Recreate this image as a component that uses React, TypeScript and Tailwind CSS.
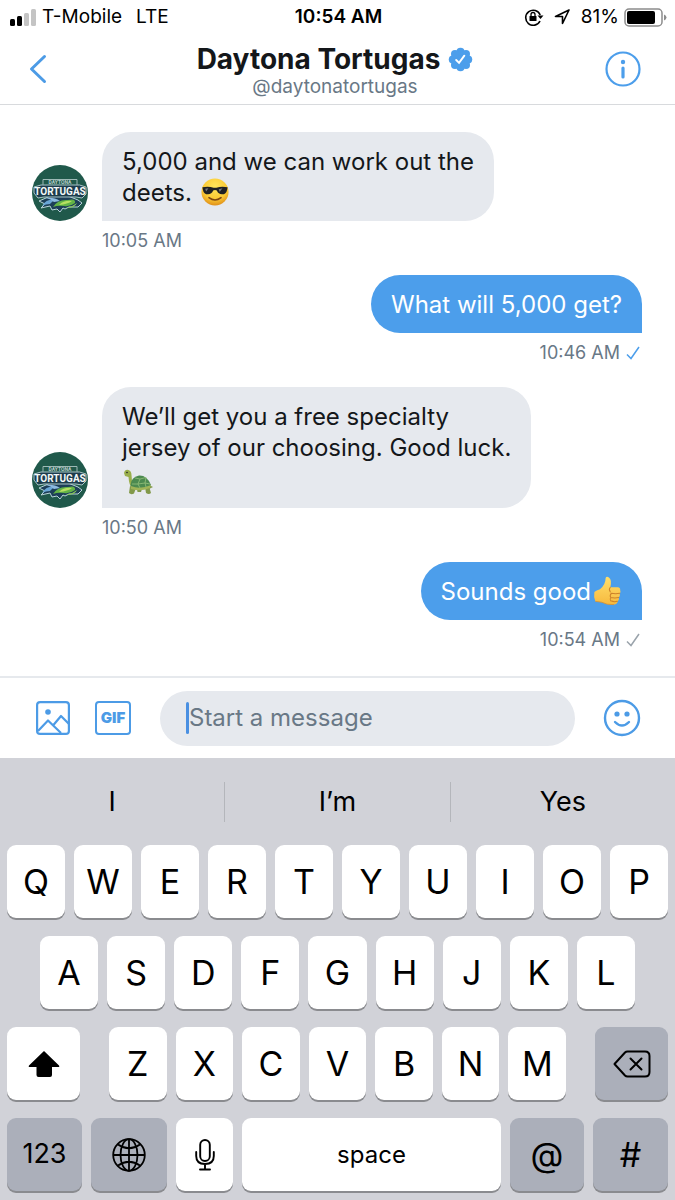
import React, { useState } from "react";

type Message = {
  id: number;
  mine: boolean;
  time: string;
  read?: boolean;
  body: React.ReactNode;
};

const TeamLogo = () => (
  <svg viewBox="0 0 56 56" className="size-14 shrink-0" role="img" aria-label="Daytona Tortugas">
    <circle cx="28" cy="28" r="28" fill="#20594b" />
    <path d="M11 20V14.500H45V20" fill="none" stroke="#9db9b6" strokeWidth="1" />
    <path
      d="M7 36L14 33L20 30L36 31L46 35L50 38L46 42H37L33 44L31 43L28 47L25 44L20 45L18 41L9 43L13 39Z"
      fill="#1d3f58"
      stroke="#b9d5d8"
      strokeWidth="1"
    />
    <path d="M10 41Q15 33 24 35Q20 36 18 39Q14 39 10 41Z" fill="#6aa6d6" />
    <path d="M14 33Q22 32 28 36L22 37Q19 34 14 33Z" fill="#8dbbe0" />
    <path d="M21 42Q26 34 36 35Q44 33 43 38Q38 42 32 41Q26 40 21 42Z" fill="#62b346" />
    <path d="M27 40Q32 35 40 36Q36 39 27 40Z" fill="#b7df62" />
    <path d="M34 43Q40 42 45 38Q43 43 34 43Z" fill="#8acb54" />
    <path
      d="M2 22Q10 19 14 20H42Q47 19 54 22L54 29L50 33L44 32H12L6 33L2 28Z"
      fill="#1c3c4c"
      stroke="#a9c6c8"
      strokeWidth="1"
    />
    <text
      x="28"
      y="19"
      textAnchor="middle"
      fontFamily="Roboto, sans-serif"
      fontWeight="700"
      fontSize="5"
      fill="#b4cbc8"
    >
      DAYTONA
    </text>
    <text
      x="28"
      y="30"
      textAnchor="middle"
      fontFamily="Roboto, sans-serif"
      fontWeight="700"
      fontSize="10"
      fill="#f3f8f8"
    >
      TORTUGAS
    </text>
  </svg>
);

const SunglassesEmoji = () => (
  <svg viewBox="0 0 30 30" className="ml-[2px] inline-block size-7 align-[-5px]" role="img" aria-label="😎">
    <defs>
      <radialGradient id="face" cx="0.5" cy="0.3" r="0.72">
        <stop offset="0" stopColor="#ffe65c" />
        <stop offset="0.65" stopColor="#fbc832" />
        <stop offset="1" stopColor="#dd8a17" />
      </radialGradient>
    </defs>
    <circle cx="15" cy="15" r="14.500" fill="url(#face)" />
    <path
      d="M1.500 10Q8 8.500 13.500 10.500H16.500Q22 8.500 28.500 10L28 12.500Q27 17.500 22.500 17.500Q18.500 17.500 17 13.500Q15 12 13 13.500Q11.500 17.500 7.500 17.500Q3 17.500 2 12.500Z"
      fill="#1f2023"
    />
    <path d="M4.500 11.500L8 11L5.500 14.500ZM19 12L23 11L20 15Z" fill="#747980" />
    <path d="M8.500 21Q15 26 21.500 21" fill="none" stroke="#7c4511" strokeWidth="1.6" strokeLinecap="round" />
  </svg>
);

const TurtleEmoji = () => (
  <svg viewBox="0 0 30 26" className="mx-px inline-block h-[26px] w-[30px] align-[-8px]" role="img" aria-label="🐢">
    <path d="M1 4Q2 0 5.500 1Q8.500 2 8.500 6L9 12L13 18L9 19Q6 16 5.500 8L2 7Z" fill="#9aaf4c" />
    <path d="M7 17L6 24Q8 26 11 24.500L13 19ZM22 18L23 24Q26 26 28 24L26 17ZM14 20L14.500 23H18L19 20Z" fill="#82994a" />
    <path d="M26 16L30 18L26 20Z" fill="#82994a" />
    <path d="M7.500 16Q8 8 16 6.500Q24 6 28 16Q22 22 9 20Z" fill="#4c8a50" />
    <path d="M8 17Q17 21 28 16L27 19Q17 23 8 20Z" fill="#a0b457" />
    <path
      d="M12 9L17 10L23 8.500M17 10L15 15L9 15M15 15L17 19M15 15L22 14L23 8.500M22 14L27 15M22 14L23 18"
      fill="none"
      stroke="#8dbb76"
      strokeWidth="0.9"
    />
    <circle cx="4" cy="3.500" r="0.8" fill="#222" />
  </svg>
);

const ThumbEmoji = () => (
  <svg viewBox="0 0 30 32" className="ml-[2px] inline-block h-[30px] w-[29px] align-top" role="img" aria-label="👍">
    <defs>
      <linearGradient id="thumb" x1="0" y1="0" x2="0" y2="1">
        <stop offset="0" stopColor="#ffdf6b" />
        <stop offset="1" stopColor="#f7b93e" />
      </linearGradient>
    </defs>
    <path
      d="M1 17Q3 15 7 14Q13 9 13 2Q14 0 16.500 1.500Q20 4 18 12L26 12Q29 12.500 28.500 15Q29.500 17 28 19Q29 21 27 23Q28 25 26 27Q25.500 30 22 30.500Q14 31 9 28L2 27Q0 22 1 17Z"
      fill="url(#thumb)"
    />
    <path
      d="M18 12Q16 14 18 17M28 18.500Q24 19.500 19 18.500M27 23Q23 24 18.500 23M25.500 27Q22 28 18.500 26.500M19 18.500Q17 21 18.500 23Q17 25 18.500 26.500"
      fill="none"
      stroke="#cd832a"
      strokeWidth="1.1"
      strokeLinecap="round"
    />
    <path d="M2 27L9 28Q14 31 22 30.500" fill="none" stroke="#d99432" strokeWidth="0.9" />
  </svg>
);

const messages: Message[] = [
  {
    id: 1,
    mine: false,
    time: "10:05 AM",
    body: (
      <>
        5,000 and we can work out the
        <br />
        deets. <SunglassesEmoji />
      </>
    ),
  },
  { id: 2, mine: true, time: "10:46 AM", read: true, body: "What will 5,000 get?" },
  {
    id: 3,
    mine: false,
    time: "10:50 AM",
    body: (
      <>
        We’ll get you a free specialty
        <br />
        jersey of our choosing. Good luck.
        <br />
        <TurtleEmoji />
      </>
    ),
  },
  {
    id: 4,
    mine: true,
    time: "10:54 AM",
    read: false,
    body: (
      <>
        Sounds good
        <ThumbEmoji />
      </>
    ),
  },
];

function StatusBar() {
  return (
    <div className="grid h-[34px] grid-cols-[1fr_auto_1fr] items-center pr-2 pl-[10px] text-[19px] leading-6 text-black">
      <div className="flex items-center gap-[6px]">
        <svg viewBox="0 0 26 17" className="h-[17px] w-[26px]" aria-hidden="true">
          <rect x="0" y="10" width="5" height="7" rx="1.500" />
          <rect x="7" y="7" width="5" height="10" rx="1.500" />
          <rect x="14" y="4" width="5" height="13" rx="1.500" fill="#c4c4c4" />
          <rect x="21" y="0" width="5" height="17" rx="1.500" fill="#c4c4c4" />
        </svg>
        <span>T-Mobile</span>
        <span className="ml-2">LTE</span>
      </div>
      <div className="font-semibold">10:54 AM</div>
      <div className="flex items-center justify-end">
        <svg
          viewBox="0 0 20 18"
          className="mr-[10px] h-[18px] w-5"
          fill="none"
          stroke="#000"
          strokeWidth="1.6"
          aria-hidden="true"
        >
          <path d="M16 13A7.500 7.500 0 1 1 16.200 7" />
          <path d="M13.500 7.500H19.500L16.500 11Z" fill="#000" stroke="none" />
          <rect x="5.500" y="8" width="7" height="5" rx="0.5" fill="#000" stroke="none" />
          <path d="M7 8V6.500a2 2 0 0 1 4 0V8" strokeWidth="1.3" />
        </svg>
        <svg
          viewBox="0 0 16 16"
          className="mr-[11px] size-4"
          fill="none"
          stroke="#000"
          strokeWidth="1.6"
          strokeLinejoin="round"
          aria-hidden="true"
        >
          <path d="M15 1L1.500 7.500H8.500V14.500Z" />
        </svg>
        <span className="mr-[5px]">81%</span>
        <svg viewBox="0 0 43 19" className="h-[19px] w-[43px]" aria-hidden="true">
          <rect x="1" y="1" width="37" height="17" rx="4" fill="none" stroke="#8c8c8c" strokeWidth="1.500" />
          <rect x="3" y="3" width="28" height="13" rx="2" />
          <path d="M40 6.500Q42.500 7.500 42.500 9.500T40 12.500Z" fill="#8c8c8c" />
        </svg>
      </div>
    </div>
  );
}

function Header() {
  return (
    <header className="border-b border-[#d8dadd] bg-white">
      <StatusBar />
      <div className="flex h-[70px] items-center justify-between pr-[34px] pl-[29px]">
        <button aria-label="Back" className="flex h-11 w-11 items-center">
          <svg
            viewBox="0 0 18 30"
            className="h-[30px] w-[18px]"
            fill="none"
            stroke="#4c9be6"
            strokeWidth="3"
            strokeLinecap="round"
            strokeLinejoin="round"
          >
            <path d="M15.500 2.500L2.500 15L15.500 27.500" />
          </svg>
        </button>
        <div className="pt-[2px] text-center">
          <h1 className="flex items-center justify-center gap-2 text-[28px] leading-[34px] font-bold text-[#14171a]">
            Daytona Tortugas
            <svg viewBox="0 0 26 26" className="size-[25px]" role="img" aria-label="Verified">
              <g fill="#4c9eeb">
                <circle cx="13" cy="13" r="9.500" />
                <circle cx="13" cy="5" r="4.200" />
                <circle cx="18.700" cy="7.300" r="4.200" />
                <circle cx="21" cy="13" r="4.200" />
                <circle cx="18.700" cy="18.700" r="4.200" />
                <circle cx="13" cy="21" r="4.200" />
                <circle cx="7.300" cy="18.700" r="4.200" />
                <circle cx="5" cy="13" r="4.200" />
                <circle cx="7.300" cy="7.300" r="4.200" />
              </g>
              <path d="M8.500 13.500L11.500 16.500L17 9" fill="none" stroke="#fff" strokeWidth="2" strokeLinecap="round" />
            </svg>
          </h1>
          <p className="text-[19px] leading-[22px] text-[#697886]">@daytonatortugas</p>
        </div>
        <button aria-label="Conversation info" className="flex h-11 w-11 items-center justify-end">
          <svg viewBox="0 0 36 36" className="size-9" fill="none" stroke="#4c9eeb" strokeWidth="2.200">
            <circle cx="18" cy="18" r="16.500" />
            <circle cx="18" cy="11" r="2.200" fill="#4c9eeb" stroke="none" />
            <path d="M18 17V26" strokeWidth="3.200" strokeLinecap="round" />
          </svg>
        </button>
      </div>
    </header>
  );
}

function MessageItem({ message }: { message: Message }) {
  if (message.mine) {
    return (
      <li className="flex flex-col items-end">
        <div className="rounded-[29px] rounded-br-none bg-[#4c9eeb] px-5 pt-[14px] pb-[13px] text-[24px] leading-[31px] text-white">
          {message.body}
        </div>
        <div className="mt-[9px] flex items-center gap-[6px] pr-[2px] text-[18px] leading-[22px] text-[#697886]">
          {message.time}
          <svg
            viewBox="0 0 14 14"
            className={message.read ? "size-[14px] text-[#4c9eeb]" : "size-[14px] text-[#9aa3ab]"}
            fill="none"
            stroke="currentColor"
            strokeWidth="1.500"
            role="img"
            aria-label={message.read ? "Seen" : "Sent"}
          >
            <path d="M1 8.500L5 12.500L13 1" />
          </svg>
        </div>
      </li>
    );
  }
  return (
    <li>
      <div className="flex items-end gap-[14px]">
        <TeamLogo />
        <div className="rounded-[29px] rounded-bl-none bg-[#e6e9ee] px-5 pt-[14px] pb-[13px] text-[24px] leading-[31px] text-[#14171a]">
          {message.body}
        </div>
      </div>
      <div className="mt-[9px] pl-[70px] text-[18px] leading-[22px] text-[#697886]">{message.time}</div>
    </li>
  );
}

function Composer() {
  const [text, setText] = useState("");
  return (
    <form
      className="flex h-[82px] items-center border-t-2 border-[#e6e9ed] bg-white pr-[34px] pl-9"
      onSubmit={(e) => e.preventDefault()}
    >
      <button type="button" aria-label="Add photo">
        <svg
          viewBox="0 0 34 34"
          className="size-[34px]"
          fill="none"
          stroke="#4c9be6"
          strokeWidth="2.200"
          strokeLinejoin="round"
        >
          <rect x="1.100" y="1.100" width="31.800" height="31.800" rx="3" />
          <circle cx="12" cy="11" r="2.800" fill="#4c9be6" stroke="none" />
          <path d="M2 30L12 19.500L25 32M17 24.500L25 15L33 23" />
        </svg>
      </button>
      <button
        type="button"
        aria-label="Add GIF"
        className="ml-[25px] flex h-[34px] w-9 items-center justify-center rounded-[4px] border-2 border-[#4c9be6] text-[15px] font-black text-[#4c9be6]"
      >
        GIF
      </button>
      <div className="ml-[29px] flex h-[55px] min-w-0 flex-1 items-center rounded-full bg-[#e6e9ee] pr-6 pl-[26px]">
        <span className="h-8 w-[3px] rounded-full bg-[#4a90e2]" />
        <input
          type="text"
          aria-label="Start a message"
          placeholder="Start a message"
          value={text}
          onChange={(e) => setText(e.target.value)}
          className="min-w-0 flex-1 bg-transparent text-[24px] leading-8 text-[#14171a] outline-none placeholder:text-[#697886]"
        />
      </div>
      <button type="button" aria-label="Add emoji" className="ml-[28px]">
        <svg
          viewBox="0 0 38 38"
          className="size-[38px]"
          fill="none"
          stroke="#4c9be6"
          strokeWidth="2.400"
          strokeLinecap="round"
        >
          <circle cx="19" cy="19" r="17" />
          <circle cx="14" cy="15" r="2.600" fill="#4c9be6" stroke="none" />
          <circle cx="24" cy="15" r="2.600" fill="#4c9be6" stroke="none" />
          <path d="M12 23Q19 30 26 23" />
        </svg>
      </button>
    </form>
  );
}

type KeyProps = {
  children: React.ReactNode;
  label?: string;
  className?: string;
  dark?: boolean;
};

function Key({ children, label, className = "flex-1 text-[34px]", dark }: KeyProps) {
  return (
    <button
      type="button"
      aria-label={label}
      className={`flex h-[73px] min-w-0 items-center justify-center rounded-[9px] text-black shadow-[0_2px_0_#8a8b8f] ${
        dark ? "bg-[#abafba]" : "bg-white"
      } ${className}`}
    >
      {children}
    </button>
  );
}

function Keyboard() {
  return (
    <div className="bg-[#d1d2d8] pb-[9px]">
      <div className="flex h-[87px] items-center text-[27px] text-black">
        {["I", "I’m", "Yes"].map((word) => (
          <button key={word} type="button" className="h-10 flex-1 border-r border-[#b4b6bb] last:border-r-0">
            {word}
          </button>
        ))}
      </div>
      <div className="flex flex-col gap-[18px]">
        <div className="flex gap-[9px] px-[7px]">
          {"QWERTYUIOP".split("").map((k) => (
            <Key key={k}>{k}</Key>
          ))}
        </div>
        <div className="flex gap-[9px] px-10">
          {"ASDFGHJKL".split("").map((k) => (
            <Key key={k}>{k}</Key>
          ))}
        </div>
        <div className="flex gap-[29px] px-[7px]">
          <Key label="Shift" className="w-[73px]">
            <svg viewBox="0 0 32 28" className="h-7 w-8" aria-hidden="true">
              <path d="M16 1L31 15.500Q32 17 30 17H24V25Q24 27 22 27H10.500Q8.500 27 8.500 25V17H2Q0 17 1 15.500Z" />
            </svg>
          </Key>
          <div className="flex min-w-0 flex-1 gap-[9px]">
            {"ZXCVBNM".split("").map((k) => (
              <Key key={k}>{k}</Key>
            ))}
          </div>
          <Key label="Delete" dark className="w-[73px]">
            <svg
              viewBox="0 0 38 28"
              className="h-7 w-[38px]"
              fill="none"
              stroke="#000"
              strokeWidth="2"
              strokeLinejoin="round"
              strokeLinecap="round"
              aria-hidden="true"
            >
              <path d="M14.500 1.500H32Q36.500 1.500 36.500 6V22Q36.500 26.500 32 26.500H14.500Q13 26.500 12 25.500L1.500 14L12 2.500Q13 1.500 14.500 1.500Z" />
              <path d="M17.500 8.500L28.500 19.500M28.500 8.500L17.500 19.500" />
            </svg>
          </Key>
        </div>
        <div className="flex gap-[9px] px-[7px]">
          <Key dark className="w-[75px] text-[27px]">
            123
          </Key>
          <Key label="Next keyboard" dark className="w-[76px]">
            <svg viewBox="0 0 34 34" className="size-[34px]" fill="none" stroke="#000" strokeWidth="1.800" aria-hidden="true">
              <circle cx="17" cy="17" r="15.800" />
              <ellipse cx="17" cy="17" rx="8.500" ry="15.800" />
              <path d="M17 1V33M1 17H33M6 6.500Q17 14 28 6.500M6 27.500Q17 20 28 27.500" />
            </svg>
          </Key>
          <Key label="Dictate" className="w-[57px]">
            <svg
              viewBox="0 0 20 32"
              className="h-8 w-5"
              fill="none"
              stroke="#000"
              strokeWidth="1.900"
              strokeLinecap="round"
              aria-hidden="true"
            >
              <rect x="5.200" y="1" width="9.600" height="21" rx="4.800" />
              <path d="M1.200 13V17Q1.200 25 10 25T18.800 17V13M10 25V30.500M5 30.500H15" />
            </svg>
          </Key>
          <Key className="flex-1 text-[24px]">space</Key>
          <Key dark className="w-[74px] text-[34px]">
            @
          </Key>
          <Key dark className="w-[75px] text-[34px]">
            #
          </Key>
        </div>
      </div>
    </div>
  );
}

function App() {
  return (
    <div className="flex min-h-screen flex-col bg-white font-[Inter,'Liberation_Sans',sans-serif]">
      <Header />
      <main className="flex-1 pt-[27px] pr-[33px] pb-[25px] pl-8">
        <ul className="flex flex-col gap-[23px]">
          {messages.map((message) => (
            <MessageItem key={message.id} message={message} />
          ))}
        </ul>
      </main>
      <Composer />
      <Keyboard />
    </div>
  );
}

export default App;
